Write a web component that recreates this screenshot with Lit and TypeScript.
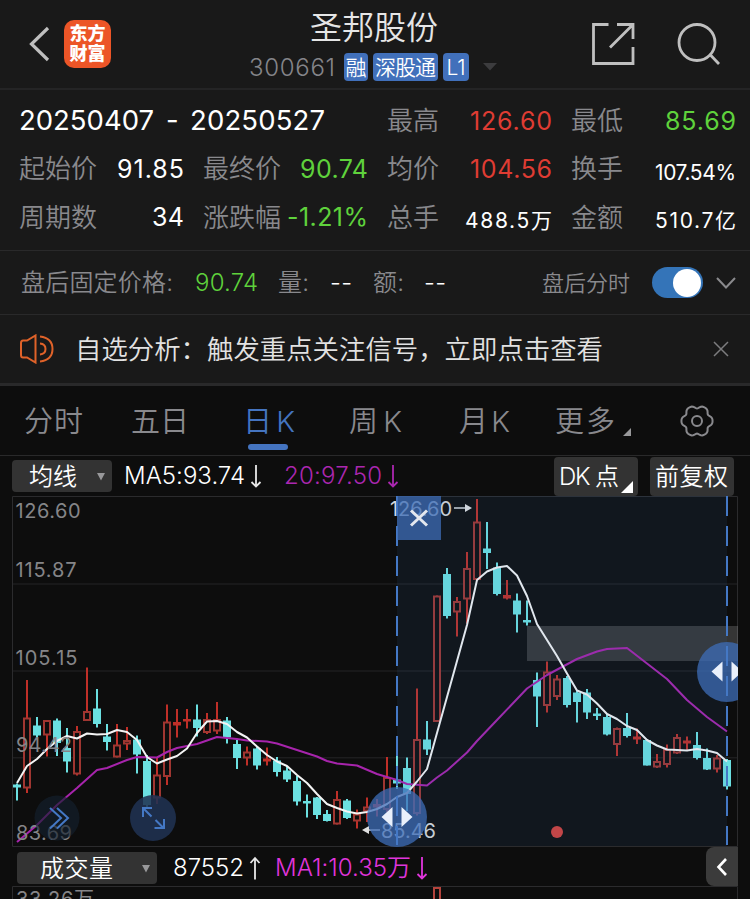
import { LitElement, html, svg, css } from "lit";
import { customElement, property, query } from "lit/decorators.js";

type Candle = [number, number, number, number, "r" | "c"];

// high, body top, body bottom, low, colour
const CANDLES: Candle[] = [
  [783.5, 784.5, 787.5, 800.5, "c"], [680, 717.5, 788.5, 793, "r"], [717, 725.5, 735.5, 738, "c"],
  [720, 720, 735.5, 756.5, "r"], [718.5, 720.5, 743, 756, "c"], [728, 748, 761.5, 772.5, "c"],
  [726, 731, 774.5, 775.5, "r"], [667.5, 711, 721, 721, "r"], [689, 708.5, 724, 727.5, "c"],
  [724, 736.5, 742, 750.5, "c"], [724, 744.5, 757.5, 757.5, "r"], [727, 740, 744.5, 750, "r"],
  [735.5, 739.5, 754.5, 773.5, "c"], [755, 761, 805, 807, "c"], [758, 774.5, 798.5, 804, "r"],
  [704.5, 721.5, 777, 785, "r"], [709, 722, 725.5, 737.5, "r"], [709, 719, 721.5, 728.5, "r"],
  [704.5, 719.5, 728, 736.5, "c"], [713, 719, 733, 734, "r"], [702, 719, 731.5, 734, "r"],
  [717, 720.5, 737.5, 743.5, "c"], [740, 744, 758, 769, "c"], [746.5, 751.5, 758.5, 765.5, "r"],
  [747, 748.5, 765.5, 769.5, "c"], [747.5, 758.5, 761.5, 765.5, "r"], [757, 760.5, 772, 776.5, "c"],
  [766, 770.5, 779.5, 782, "c"], [776, 781, 801.5, 805.5, "c"], [794.5, 801, 803.5, 817.5, "c"],
  [797, 797.5, 815, 819, "c"], [810, 814, 821, 821.5, "c"], [791, 799, 824.5, 824.5, "r"],
  [799, 800.5, 818, 819, "c"], [809.5, 813.5, 821.5, 828.5, "r"], [797.5, 806.5, 811.5, 822, "r"],
  [799, 804, 807.5, 816.5, "r"], [757, 777, 810, 812, "r"], [755, 779.5, 783.5, 789, "c"],
  [757.5, 768, 794, 811, "c"], [688.5, 739, 814, 815.5, "r"], [721, 739.5, 749.5, 755, "c"],
  [595.5, 595.5, 722, 722, "r"], [568, 574, 616, 618.5, "c"], [597, 601, 612.5, 636.5, "r"],
  [552, 568, 599.5, 623.5, "r"], [499, 521.5, 580, 580.5, "r"], [522, 548.5, 553, 569, "c"],
  [562.5, 567.5, 594, 595.5, "c"], [580, 595, 598.5, 599.5, "r"], [593.5, 600.5, 614.5, 632.5, "c"],
  [600.5, 620, 622.5, 625.5, "c"], [672.5, 680, 696.5, 727, "c"], [661.5, 671.5, 706, 712.5, "r"],
  [675, 678.5, 697, 700, "r"], [676, 678, 705, 707.5, "c"], [690, 692.5, 702, 722.5, "c"],
  [689, 692.5, 712.5, 719, "c"], [708, 713.5, 716, 720, "c"], [714, 717, 734.5, 735.5, "c"],
  [727.5, 728, 745, 756, "r"], [713, 728, 736, 737.5, "c"], [728.5, 736.5, 739.5, 744, "r"],
  [739.5, 740, 765.5, 765.5, "c"], [754, 761, 767.5, 768, "r"], [744.5, 749, 765, 767.5, "r"],
  [734, 737, 753.5, 754, "r"], [736.5, 740.5, 743.5, 750, "r"], [732, 745, 758, 759.5, "c"],
  [748.5, 758, 769.5, 770, "c"], [755, 757.5, 769.5, 772.5, "r"], [759, 760, 786.5, 789.5, "c"],
];

const MA5 = "17,783 27,766 37,759 47,749 57,741 67,736 77,738.5 87,733.5 97,734.5 107,734 117,730 127,732 137,740 147,757 157,763.5 167,759.5 177,756 187,748.5 197,733 207,721.5 217,721 227,724 237,732 247,737.5 257,746.5 267,755 277,761.5 287,766 297,775 307,783 317,794 327,804 337,808 347,811.5 357,813.5 367,812 377,809 387,804 397,797 407,793 417,781.5 427,769 437,733 447,697 457,661 467,625 477,580 487,571.5 497,567.5 507,566 517,575.5 527,596 537,624 547,640 557,656 567,673.5 577,690.5 587,694.5 597,703.5 607,714 617,719 627,726 637,730 647,740 657,745.5 667,749.5 677,750 687,750.5 697,749 707,750.5 717,753 727,761.5";
const MA20 = "17,842 37,825 57,805 77,788 97,770 107,768 127,760 137,757 157,757.5 167,752 177,748 197,744 217,737 237,739 247,740.5 267,741.5 277,743.5 297,750 317,756.5 327,761 337,763.5 357,765.5 377,774 397,780 407,784 427,785.5 437,777.5 447,770.5 467,752.5 477,741 497,720 527,688.5 547,675 562,667 577,659 597,651.5 607,649 627,648 647,663.5 667,679 687,700 707,717 727,731.5";

/** A line of text whose tracking is set so that it fills the given width. */
@customElement("fit-text")
export class FitText extends LitElement {
  @property({ type: Number }) w = 0;
  @property() text = "";
  @query("span") span!: HTMLSpanElement;
  static styles = css`
    :host { display: block; flex: none; white-space: pre; }
    span { display: inline-block; }
  `;
  render() {
    return html`<span>${this.text}</span>`;
  }
  updated() {
    const n = this.text.length - 1;
    const natural = this.span.getBoundingClientRect().width;
    const spacing = n > 0 ? (this.w - natural) / n : 0;
    this.span.style.letterSpacing = `${spacing}px`;
    this.style.width = `${this.w}px`;
  }
}

const t = (text: string, w: number, cls = "") =>
  html`<fit-text class=${cls} .text=${text} .w=${w}></fit-text>`;

@customElement("k-chart")
export class KChart extends LitElement {
  static styles = css`
    :host { display: block; height: 351px; }
    svg { display: block; }
    .axis { fill: #858588; font: 20px Inter, "Liberation Sans", sans-serif; }
    .mark { fill: #d5d7da; font: 20px Inter, "Liberation Sans", sans-serif; }
    .frame { fill: none; stroke: #2b2b2d; }
    .grid { stroke: #1d1d1e; stroke-width: 1.5; }
    .up { stroke: #bf2f28; stroke-width: 2; }
    .up-body { fill: #0d0d0d; stroke: #a03631; stroke-width: 2; }
    .up-flat { fill: #bf2f28; }
    .down { stroke: #6be0e1; stroke-width: 2; }
    .down-body { fill: #6be0e1; }
    .ma5 { fill: none; stroke: #f4f4f4; stroke-width: 2; stroke-linejoin: round; }
    .ma20 { fill: none; stroke: #a724ac; stroke-width: 2; stroke-linejoin: round; }
    .tint { fill: rgba(63, 113, 183, 0.1); }
    .band { fill: rgba(255, 255, 255, 0.17); }
    .limit { stroke: #4478c5; stroke-width: 2; stroke-dasharray: 20 10; }
    .handle { fill: rgba(62, 109, 184, 0.75); }
    .close { fill: rgba(62, 109, 184, 0.75); }
    .white { fill: #e9f0fb; }
    .cross { stroke: #e3e7ee; stroke-width: 3; }
    .blue { fill: none; stroke: #4478c5; stroke-width: 2; }
  `;
  private candle([hi, top, bot, lo, k]: Candle, i: number) {
    const x = 17 + i * 10;
    if (k === "c")
      return svg`<path class="down" d="M${x} ${hi}V${lo}"/><rect class="down-body" x=${x - 4} y=${top} width="8" height=${bot - top}/>`;
    const body = bot - top < 4.2
      ? svg`<rect class="up-flat" x=${x - 4} y=${top} width="8" height=${bot - top}/>`
      : svg`<rect class="up-body" x=${x - 3} y=${top + 1} width="6" height=${bot - top - 2}/>`;
    return svg`<path class="up" d="M${x} ${hi}V${top + 1}M${x} ${bot - 1}V${lo}"/>${body}`;
  }
  render() {
    return html`<svg width="750" height="351" viewBox="0 496 750 351">
      <defs><clipPath id="plot"><rect x="12" y="496" width="726" height="351"/></clipPath></defs>
      <path class="grid" d="M13 584H738M13 671H738M13 757.8H738"/>
      <path class="frame" d="M12.5 496.5H737.5V846.5H12.5Z"/>
      <rect class="band" x="527" y="626" width="211" height="35"/>
      ${CANDLES.map((c, i) => this.candle(c, i))}
      <polyline class="ma20" points=${MA20}/>
      <polyline class="ma5" points=${MA5}/>
      <text class="axis" x="15.5" y="518" textLength="65">126.60</text>
      <text class="axis" x="15.5" y="577" textLength="61">115.87</text>
      <text class="axis" x="15.5" y="665" textLength="62">105.15</text>
      <text class="axis" x="16" y="752" textLength="56">94.42</text>
      <text class="axis" x="16" y="840" textLength="56">83.69</text>
      <circle cx="557" cy="832" r="6" fill="#d2413c"/>
      <text class="mark" x="390" y="516" textLength="62">126.60</text>
      <text class="mark" x="381" y="838" textLength="55">85.46</text>
      <path d="M454 508H466M367 830H380" stroke="#d5d7da" stroke-width="1.5"/>
      <path d="M472 508L465 504V512ZM362 830L369 826V834Z" fill="#e0e0e0"/>
      <rect class="tint" x="397" y="496" width="330" height="350"/>
      <g clip-path="url(#plot)">
        <circle class="handle" cx="397" cy="817" r="30"/>
        <circle class="handle" cx="727" cy="672" r="30"/>
        <path class="white" d="M381.5 817L392.5 807V827ZM412.5 817L401.5 807V827ZM711.5 671.5L722.5 661.5V681.5ZM742.5 671.5L731.5 661.5V681.5Z"/>
      </g>
      <path class="limit" d="M397 496V845M727 496V845"/>
      <rect class="close" x="397" y="496" width="44" height="44"/>
      <path class="cross" d="M411 510.500L427 525.500M427 510.500L411 525.500"/>
      <circle cx="57" cy="818" r="22.500" fill="rgba(20,32,46,.65)"/>
      <path class="blue" d="M50 808L61 818L50 828.500M57 808L68 818L57 828.500"/>
      <circle cx="153" cy="818" r="23" fill="rgba(32,50,82,.88)"/>
      <path class="blue" d="M143 817V808H152M143.500 808.500L151.500 816.500M154.500 828H164V819M163.500 828L155.500 820"/>
    </svg>`;
  }
}

const GEAR = Array.from({ length: 73 }, (_, i) => {
  const a = (i * 5 * Math.PI) / 180;
  const r = 14.4 + 1.5 * Math.cos(6 * a) - 0.35 * Math.cos(12 * a);
  return `${(17 + r * Math.cos(a)).toFixed(2)},${(17 + r * Math.sin(a)).toFixed(2)}`;
}).join(" ");

const arrow = (cls: string, up = false) => html`<svg class="arrow ${cls}" width="12" height="24" viewBox="0 0 12 24">
  <path d=${up ? "M6 23.500V2M1.500 7L6 2L10.500 7" : "M6 1V22.500M1.500 18L6 22.500L10.500 18"}/></svg>`;

@customElement("app-root")
export class AppRoot extends LitElement {
  static styles = css`
    :host {
      display: flex; flex-direction: column; width: 750px; height: 899px; overflow: hidden;
      background: #0d0d0d; color: #fff;
      font-family: Inter, "Noto Sans CJK SC", sans-serif; font-weight: 350; line-height: 1;
    }
    * { box-sizing: border-box; }
    svg { display: block; flex: none; }
    .gray { color: #89898d; }
    .red { color: #df3c33; }
    .green { color: #5fd23c; }
    .blue { color: #4474c0; }
    .violet { color: #ab27b0; }
    .pink { color: #e035dc; }
    .stroke { fill: none; stroke: #bfbfbf; stroke-width: 2.8; }
    .bold { stroke-width: 3.2; }

    .header { display: grid; grid-template-columns: 64px 184px 249px 94px 86px 1fr; height: 90px; background: #191919; border-bottom: 2px solid #242425; align-items: center; }
    .back { margin-left: 28px; }
    .logo { width: 47px; height: 48px; border-radius: 10px; background: #ec5527; font-size: 18px; font-weight: 900; display: flex; flex-direction: column; align-items: center; justify-content: center; gap: 2px; }
    .name { font-size: 32px; color: #e6e6e6; margin: 0 0 9px 62px; }
    .title { align-self: start; padding-top: 12px; }
    .code { display: flex; align-items: center; height: 28px; margin: 1px 0 0 1px; }
    .code .num { font-size: 24px; margin-right: 9px; color: #85858a; padding-top: 2px; }
    .tag { height: 28px; border-radius: 4px; background: #4170bb; font-size: 21px; display: flex; align-items: center; justify-content: center; margin-right: 5px; }
    .t1 { width: 24px; } .t2 { width: 65px; } .t3 { width: 26px; }
    .caret { margin-left: 9px; }

    .stats { display: grid; grid-template-columns: repeat(4, 164px); column-gap: 20px; grid-template-rows: repeat(3, 48.300px); padding: 7px 14px 0 19px; height: 161px; background: #191919; border-bottom: 1px solid #29292a; font-size: 26px; }
    .cell { display: flex; justify-content: space-between; align-items: center; margin-right: -1px; }
    .cell .v { font-size: 25px; font-weight: 400; }
    .cell .small { font-size: 21px; padding-top: 6px; }
    .range { grid-column: span 2; font-size: 27.500px; font-weight: 400; display: flex; align-items: center; gap: 12px; }

    .after { display: grid; grid-template-columns: 174px 83px 52px 43px 51px 118px 110px 64px 1fr; align-items: center; height: 64px; padding-left: 21px; background: #191919; border-bottom: 1px solid #29292a; font-size: 24px; }
    .after .dim { font-size: 22px; }
    .switch { width: 51px; height: 31px; border-radius: 16px; background: #3474b8; display: flex; justify-content: flex-end; align-items: center; padding-right: 2px; }
    .knob { width: 28px; height: 28px; border-radius: 50%; background: #fff; }

    .notice { display: grid; grid-template-columns: 56px 1fr 37px; align-items: center; height: 71px; padding-left: 19px; background: #191919; border-bottom: 3px solid #29292a; font-size: 26.400px; color: #e2e2e2; }

    .tabs { display: grid; grid-template-columns: 107px 112px 106px 110px 96px 125px 1fr; align-items: center; height: 70px; padding: 0 0 0 24px; border-bottom: 1px solid #29292a; font-size: 29px; }
    .tabs > :not(svg) { margin-top: 2px; }
    .active { position: relative; }
    .active::after { content: ""; position: absolute; left: 5px; top: 37px; width: 40px; height: 6px; border-radius: 3px; background: #4474c0; }
    .more { display: flex; align-items: flex-end; gap: 8px; }

    .tools, .volume { display: flex; align-items: center; height: 40px; padding-left: 12px; font-size: 24px; }
    .volume { height: 39px; padding-left: 17px; padding-top: 3px; }
    .tools { padding-right: 16px; }
    .btn { display: flex; align-items: center; justify-content: space-between; background: #333; border-radius: 4px; height: 32px; width: 100px; padding: 1px 7px 0 17px; margin-right: 12px; }
    .volume .btn { width: 140px; padding-left: 23px; margin-right: 16px; }
    .tools .tall { height: 39px; width: 84px; padding: 2px 5px 0; margin: 0 0 0 12px; }
    .tools .push { margin-left: auto; }
    .tall svg { align-self: flex-end; margin-bottom: 3px; }
    .arrow { fill: none; stroke: #e8e8e8; stroke-width: 1.800; margin: 0 22px 0 5px; }
    .volume .arrow { margin-right: 14px; }
    .arrow.violet { stroke: #ab27b0; }
    .arrow.pink { stroke: #e035dc; }
    .fold { display: flex; align-items: center; justify-content: center; align-self: flex-end; width: 32px; height: 39px; margin: 0 12px 0 auto; background: #3b3b3b; border-radius: 8px 0 0 8px; }
    .foot { height: 13px; }
    .axis { fill: #858588; font: 20px Inter, "Noto Sans CJK SC", sans-serif; }
  `;

  private cell(label: string, value: string, w: number, cls = "") {
    return html`<div class="cell">${t(label, label.length * 26, "gray")}${t(value, w, "v " + cls)}</div>`;
  }

  render() {
    return html`
      <div class="header">
        <svg class="back" width="22" height="36" viewBox="0 0 22 36"><path class="stroke bold" d="M20 2L3.500 18L20 34"/></svg>
        <div class="logo"><span>东方</span><span>财富</span></div>
        <div class="title">
          <div class="name">${t("圣邦股份", 128)}</div>
          <div class="code">
            ${t("300661", 86, "num")}
            <span class="tag t1">融</span>
            <span class="tag t2">${t("深股通", 61)}</span>
            <span class="tag t3">L1</span>
            <svg class="caret" width="14" height="8" viewBox="0 0 14 8"><path d="M0 0H14L7 7.500Z" fill="#3c3c3e"/></svg>
          </div>
        </div>
        <span></span>
        <svg width="44" height="44" viewBox="0 0 44 44"><path class="stroke" d="M17.500 2.500H2.500V41.500H42V25M26 2.500H42V17M19 25.500L41.500 3"/></svg>
        <svg width="44" height="44" viewBox="0 0 44 44"><path class="stroke" d="M32.500 32L42 42"/><circle class="stroke" cx="20" cy="20.500" r="18"/></svg>
      </div>

      <div class="stats">
        <div class="range">${t("20250407", 135)}${t("-", 12)}${t("20250527", 135)}</div>
        ${this.cell("最高", "126.60", 82, "red")}
        ${this.cell("最低", "85.69", 71, "green")}
        ${this.cell("起始价", "91.85", 67)}
        ${this.cell("最终价", "90.74", 68, "green")}
        ${this.cell("均价", "104.56", 82, "red")}
        ${this.cell("换手", "107.54%", 81, "small")}
        ${this.cell("周期数", "34", 32)}
        ${this.cell("涨跌幅", "-1.21%", 81, "green")}
        ${this.cell("总手", "488.5万", 87, "small")}
        ${this.cell("金额", "510.7亿", 81, "small")}
      </div>

      <div class="after">
        ${t("盘后固定价格:", 152, "gray")}
        ${t("90.74", 63, "green")}
        ${t("量:", 31, "gray")}
        ${t("--", 22)}
        ${t("额:", 31, "gray")}
        ${t("--", 22)}
        ${t("盘后分时", 88, "gray dim")}
        <div class="switch"><div class="knob"></div></div>
        <svg width="20" height="14" viewBox="0 0 20 14"><path d="M1 2L10 11.500L19 2" fill="none" stroke="#8a8a8d" stroke-width="2"/></svg>
      </div>

      <div class="notice">
        <svg width="36" height="30" viewBox="0 0 36 30"><path d="M16.500 1.500V28.500L8 23.500H4Q2 23.500 2 21V9Q2 6.500 4 6.500H8ZM21 9.500Q26.500 10 26.500 15T21 20.500M21 2.500Q33.500 4 33.500 15T21 27.500" fill="none" stroke="#df6229" stroke-width="2"/></svg>
        ${t("自选分析：触发重点关注信号，立即点击查看", 528)}
        <svg width="16" height="16" viewBox="0 0 16 16"><path d="M1 1L15 15M15 1L1 15" stroke="#7c7c7e" stroke-width="1.500"/></svg>
      </div>

      <div class="tabs gray">
        ${t("分时", 59)}
        ${t("五日", 58)}
        <div class="active blue">${t("日 K", 52)}</div>
        ${t("周 K", 53)}
        ${t("月 K", 51)}
        <div class="more">${t("更多", 60)}<svg width="8" height="8" viewBox="0 0 8 8"><path d="M8 0V8H0Z" fill="#98989a"/></svg></div>
        <svg width="34" height="34" viewBox="0 0 34 34"><polygon points=${GEAR} fill="none" stroke="#89898d" stroke-width="2"/><circle cx="17" cy="17" r="5" fill="none" stroke="#89898d" stroke-width="2"/></svg>
      </div>

      <div class="tools">
        <div class="btn">${t("均线", 48)}<svg width="8" height="8" viewBox="0 0 8 8"><path d="M0 0H8L4 7.500Z" fill="#98989a"/></svg></div>
        ${t("MA5:93.74", 121)}${arrow("")}
        ${t("20:97.50", 98, "violet")}${arrow("violet")}
        <div class="btn tall push">${t("DK 点", 60)}<svg width="12" height="12" viewBox="0 0 12 12"><path d="M12 0V12H0Z" fill="#fff"/></svg></div>
        <div class="btn tall">${t("前复权", 73)}</div>
      </div>

      <k-chart></k-chart>

      <div class="volume">
        <div class="btn">${t("成交量", 73)}<svg width="8" height="8" viewBox="0 0 8 8"><path d="M0 0H8L4 7.500Z" fill="#98989a"/></svg></div>
        ${t("87552", 71)}${arrow("", true)}
        ${t("MA1:10.35万", 136, "pink")}${arrow("pink")}
        <div class="fold"><svg width="12" height="20" viewBox="0 0 12 20"><path d="M10 2L2.500 10L10 18" fill="none" stroke="#fff" stroke-width="2.600"/></svg></div>
      </div>
      <svg class="foot" width="750" height="13" viewBox="0 886 750 13">
        <path d="M12.500 899V886.500H737.500V899" fill="none" stroke="#2b2b2d"/>
        <text class="axis" x="16" y="906" textLength="78">33.26万</text>
        <path d="M434 899V888H440V899" fill="none" stroke="#b5433c" stroke-width="2"/>
      </svg>
    `;
  }
}
